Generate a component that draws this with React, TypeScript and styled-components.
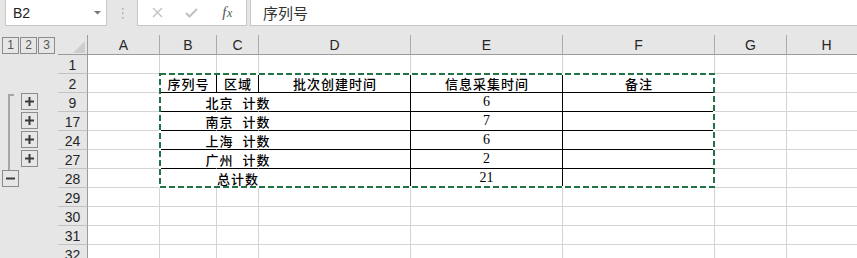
import React from 'react';
import styled, { createGlobalStyle } from 'styled-components';

const GRAY = '#e6e6e6';
const GRID = '#d4d4d4';
const HEAD_LINE = '#ababab';
const CJK = '"Noto Sans CJK SC", "Noto Sans", sans-serif';

const Global = createGlobalStyle`
  html, body { margin: 0; padding: 0; background: #fff; }
  body { font-family: "Liberation Sans", Arial, sans-serif; }
  #root { width: 857px; height: 258px; overflow: hidden; }
`;

const Frame = styled.div`
  width: 857px;
  height: 258px;
  overflow: hidden;
  background: ${GRAY};
  display: flex;
  flex-direction: column;
`;

/* ---------- formula bar ---------- */
const TopBar = styled.div`
  height: 35px;
  flex: none;
  display: flex;
  align-items: flex-start;
`;

const Box = styled.div`
  margin-top: -1px;
  height: 27px;
  box-sizing: border-box;
  border: 1px solid #c6c6c6;
  background: #fff;
`;

const NameBox = styled(Box)`
  margin-left: 5px;
  width: 102px;
  display: flex;
  align-items: center;
  justify-content: space-between;
  padding: 1px 5px 0 7px;
  font-size: 14px;
  color: #222;
`;

const Grip = styled.div`
  width: 30px;
  height: 26px;
  display: flex;
  align-items: center;
  justify-content: center;
`;

const FxBox = styled(Box)`
  width: 110px;
  display: grid;
  grid-template-columns: 34px 35px 1fr;
  padding-left: 2px;
  align-items: center;
  justify-items: center;
`;

const FxText = styled.span`
  font-family: "Liberation Serif", serif;
  font-style: italic;
  font-size: 15px;
  color: #555;
  letter-spacing: 0.5px;
  & > small { font-size: 12px; }
`;

const FormulaInput = styled(Box)`
  flex: 1;
  margin-left: 3px;
  margin-right: -2px;
  display: flex;
  align-items: center;
  padding-left: 12px;
  font-family: ${CJK};
  font-size: 15px;
  color: #333;
`;

/* ---------- sheet ---------- */
const Sheet = styled.div`
  flex: none;
  display: grid;
  grid-template-columns: 20px 38px 30px 72px 57px 42px 152px 152px 152px 72px 80px;
  grid-template-rows: 20px repeat(11, 19px);
  background: #fff;
`;

type Pos = { $r: string | number; $c: string | number };

const Placed = styled.div<Pos>`
  grid-row: ${(p) => p.$r};
  grid-column: ${(p) => p.$c};
  box-sizing: border-box;
  min-width: 0;
`;

const Gutter = styled(Placed)`
  background: ${GRAY};
`;

const Levels = styled(Placed)`
  display: flex;
  gap: 1px;
  padding: 2px 0 0 2px;
`;

const LevelBtn = styled.div`
  width: 17px;
  height: 17px;
  box-sizing: border-box;
  border: 1px solid #8c8c8c;
  font-size: 12px;
  line-height: 15px;
  text-align: center;
  color: #555;
`;

const Bracket = styled(Placed)`
  margin: 1px 0 3px 8px;
  width: 6px;
  border-left: 2px solid #a6a6a6;
  border-top: 2px solid #a6a6a6;
`;

const OutlineBtn = styled(Placed)<{ $left: number; $top: number }>`
  align-self: start;
  justify-self: start;
  margin: ${(p) => p.$top}px 0 0 ${(p) => p.$left}px;
  width: 17px;
  height: 17px;
  border: 1px solid #8c8c8c;
  background: ${GRAY};
  display: flex;
  align-items: center;
  justify-content: center;
`;

const Corner = styled(Placed)`
  background: ${GRAY};
  border-right: 1px solid #9b9b9b;
  border-bottom: 1px solid #9b9b9b;
  display: flex;
  align-items: flex-end;
  justify-content: flex-end;
  padding: 0 2px 1px 0;
`;

const ColHead = styled(Placed)`
  background: ${GRAY};
  border-right: 1px solid ${HEAD_LINE};
  border-bottom: 1px solid #9b9b9b;
  font-size: 14px;
  line-height: 19px;
  padding-top: 1px;
  text-align: center;
  color: #262626;
`;

const RowHead = styled(Placed)`
  background: ${GRAY};
  border-right: 1px solid #9b9b9b;
  border-bottom: 1px solid #c2c2c2;
  font-size: 14px;
  line-height: 18px;
  padding-top: 1px;
  text-align: center;
  color: #262626;
`;

const Cell = styled(Placed)<{ $right?: string; $bottom?: string }>`
  border-right: 1px solid ${(p) => p.$right ?? GRID};
  border-bottom: 1px solid ${(p) => p.$bottom ?? GRID};
  display: flex;
  align-items: center;
  justify-content: center;
  white-space: nowrap;
  color: #000;
`;

const HeadText = styled.span`
  font-family: ${CJK};
  font-size: 13px;
  font-weight: 500;
  letter-spacing: 1px;
  margin-right: -1px;
`;

const LabelText = styled(HeadText)`
  word-spacing: 5px;
`;

const NumText = styled.span`
  font-family: "Liberation Serif", serif;
  font-size: 14px;
`;

const Marquee = styled(Placed)`
  margin: -1px 0 0 -1px;
  z-index: 2;
  pointer-events: none;
  & > svg { display: block; width: 100%; height: 100%; }
`;

/* ---------- data ---------- */
const COLS = ['A', 'B', 'C', 'D', 'E', 'F', 'G', 'H'];
const ROWS = [1, 2, 9, 17, 24, 27, 28, 29, 30, 31, 32];
const HEADERS = ['序列号', '区域', '批次创建时间', '信息采集时间', '备注'];
const GROUPS = [
  { label: '北京 计数', value: '6' },
  { label: '南京 计数', value: '7' },
  { label: '上海 计数', value: '6' },
  { label: '广州 计数', value: '2' },
  { label: '总计数', value: '21' },
];
const BLACK = '#000';

const PlusIcon = ({ minus }: { minus?: boolean }) => (
  <svg width="9" height="9" viewBox="0 0 9 9">
    <rect x="0" y="3.5" width="9" height="2" fill="#3c3c3c" />
    {!minus && <rect x="3.5" y="0" width="2" height="9" fill="#3c3c3c" />}
  </svg>
);

export default function App() {
  const cells: React.ReactNode[] = [];

  ROWS.forEach((rowNum, i) => {
    const r = i + 2;
    cells.push(
      <RowHead key={`rh${r}`} $r={r} $c={3}>
        {rowNum}
      </RowHead>
    );
    COLS.forEach((_, j) => {
      const c = j + 4;
      const key = `c${r}-${c}`;
      const inTable = c >= 5 && c <= 9;
      if (r === 3 && inTable) {
        cells.push(
          <Cell key={key} $r={r} $c={c} $right={BLACK} $bottom={BLACK}>
            <HeadText>{HEADERS[c - 5]}</HeadText>
          </Cell>
        );
      } else if (r >= 4 && r <= 8 && inTable) {
        const g = GROUPS[r - 4];
        const right = c === 5 || c === 6 ? '#fff' : BLACK;
        cells.push(
          <Cell key={key} $r={r} $c={c} $right={right} $bottom={BLACK}>
            {c === 6 && <LabelText>{g.label}</LabelText>}
            {c === 8 && <NumText>{g.value}</NumText>}
          </Cell>
        );
      } else {
        cells.push(<Cell key={key} $r={r} $c={c} />);
      }
    });
  });

  return (
    <>
      <Global />
      <Frame>
        <TopBar>
          <NameBox>
            <span>B2</span>
            <svg width="7" height="4" viewBox="0 0 7 4">
              <polygon points="0,0 7,0 3.5,3.5" fill="#777" />
            </svg>
          </NameBox>
          <Grip>
            <svg width="3" height="12" viewBox="0 0 3 12">
              <rect x="1" y="1" width="1.5" height="1.5" fill="#a8a8a8" />
              <rect x="1" y="5.5" width="1.5" height="1.5" fill="#a8a8a8" />
              <rect x="1" y="10" width="1.5" height="1.5" fill="#a8a8a8" />
            </svg>
          </Grip>
          <FxBox>
            <svg width="11" height="11" viewBox="0 0 11 11">
              <path d="M1 1 L10 10 M10 1 L1 10" stroke="#c2c2c2" strokeWidth="1.4" />
            </svg>
            <svg width="13" height="10" viewBox="0 0 13 10">
              <path d="M1 5 L4.5 8.5 L12 1" stroke="#c2c2c2" strokeWidth="2" fill="none" />
            </svg>
            <FxText>
              f<small>x</small>
            </FxText>
          </FxBox>
          <FormulaInput>序列号</FormulaInput>
        </TopBar>

        <Sheet>
          <Gutter $r="1 / -1" $c="1 / 3" />
          <Levels $r={1} $c="1 / 3">
            <LevelBtn>1</LevelBtn>
            <LevelBtn>2</LevelBtn>
            <LevelBtn>3</LevelBtn>
          </Levels>
          <Corner $r={1} $c={3}>
            <svg width="12" height="12" viewBox="0 0 12 12">
              <polygon points="12,0 12,12 0,12" fill="#cdcdcd" />
            </svg>
          </Corner>
          {COLS.map((l, j) => (
            <ColHead key={l} $r={1} $c={j + 4}>
              {l}
            </ColHead>
          ))}

          <Bracket $r="4 / 9" $c={1} />
          {[4, 5, 6, 7].map((r) => (
            <OutlineBtn key={r} $r={r} $c={2} $left={1} $top={0}>
              <PlusIcon />
            </OutlineBtn>
          ))}
          <OutlineBtn $r={8} $c={1} $left={2} $top={1}>
            <PlusIcon minus />
          </OutlineBtn>

          {cells}

          <Marquee $r="3 / 9" $c="5 / 10">
            <svg viewBox="0 0 556 115" preserveAspectRatio="none">
              <rect x="1" y="1" width="554" height="113" fill="none" stroke="#fff" strokeWidth="2" />
              <rect
                x="1"
                y="1"
                width="554"
                height="113"
                fill="none"
                stroke="#217346"
                strokeWidth="2"
                strokeDasharray="6 3"
              />
            </svg>
          </Marquee>
        </Sheet>
      </Frame>
    </>
  );
}
